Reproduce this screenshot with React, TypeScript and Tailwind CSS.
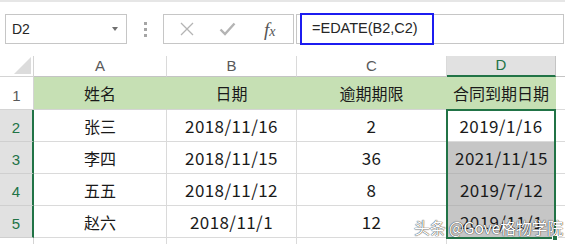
import React from 'react';

const rows = [
  ['姓名', '日期', '逾期期限', '合同到期日期'],
  ['张三', '2018/11/16', '2', '2019/1/16'],
  ['李四', '2018/11/15', '36', '2021/11/15'],
  ['五五', '2018/11/12', '8', '2019/7/12'],
  ['赵六', '2018/11/1', '12', '2019/11/1'],
];

const cjk = "font-['Microsoft_YaHei','Noto_Sans_CJK_SC',sans-serif]";
const ui = "font-['Liberation_Sans',Arial,sans-serif]";

function RowHead({ n }: { n: number }) {
  const sel = n >= 2;
  return (
    <div
      className={`flex items-end justify-center pb-[2px] text-[15px] ${ui} border-b ${
        sel
          ? 'bg-[#e1e1e1] text-[#217346] border-r-2 border-r-[#217346] border-b-[#cfcfcf]'
          : 'bg-white text-[#595959] border-r border-[#d4d4d4]'
      }`}
    >
      {n}
    </div>
  );
}

export default function App() {
  return (
    <div className="w-[565px] h-[244px] bg-white overflow-hidden relative">
      <div className="h-[2px] bg-[#e6e6e6]" />

      {/* formula toolbar */}
      <div className={`flex items-center mt-[12px] h-[30px] ${ui}`}>
        <div className="ml-[5px] w-[122px] h-[30px] border border-[#c6c6c6] flex items-center justify-between pl-[6px] pr-[8px]">
          <span className="text-[14px] text-[#262626]">D2</span>
          <span className="w-0 h-0 border-x-[3.5px] border-x-transparent border-t-[4px] border-t-[#707070]" />
        </div>
        <div className="w-[36px] flex flex-col items-center gap-[3px]">
          <span className="w-[3px] h-[3px] bg-[#a6a6a6]" />
          <span className="w-[3px] h-[3px] bg-[#a6a6a6]" />
          <span className="w-[3px] h-[3px] bg-[#a6a6a6]" />
        </div>
        <div className="w-[131px] h-[30px] border border-[#c6c6c6] flex items-center">
          <svg width="16" height="16" viewBox="0 0 16 16" className="ml-[15px]">
            <path d="M2 2 L14 14 M14 2 L2 14" stroke="#b4b4b4" strokeWidth="1.3" fill="none" />
          </svg>
          <svg width="17" height="14" viewBox="0 0 17 14" className="ml-[24px]">
            <path d="M1.5 7.5 L6 12 L15.5 1.5" stroke="#b4b4b4" strokeWidth="2.4" fill="none" />
          </svg>
          <span className="ml-[28px] text-[19px] italic text-[#555555] font-['Liberation_Serif',serif] leading-none">
            f<span className="text-[14px]">x</span>
          </span>
        </div>
        <div className="ml-[2px] w-[268px] h-[30px] border border-[#c6c6c6] flex items-center">
          <div className="ml-[3px] w-[134px] h-[32px] border-2 border-[#1c1cf0] flex items-center pl-[10px] text-[14.5px] text-[#262626]">
            =EDATE(B2,C2)
          </div>
        </div>
      </div>

      {/* sheet grid */}
      <div className="relative mt-[12px] grid grid-cols-[34px_133px_130px_150px_109px_1fr] grid-rows-[21px_33px_32px_32px_32px_32px_1fr] h-[188px]">
        {/* column header row */}
        <div className="border-r border-b border-[#d4d4d4] bg-white flex items-end justify-end pr-[2px] pb-[2px]">
          <svg width="17" height="17" viewBox="0 0 17 17">
            <path d="M17 0 L17 17 L0 17 Z" fill="#dcdcdc" />
          </svg>
        </div>
        {['A', 'B', 'C'].map((c) => (
          <div key={c} className={`border-r border-b border-r-[#dadada] border-b-[#c4c4c4] flex items-center justify-center text-[15px] text-[#595959] ${ui}`}>
            {c}
          </div>
        ))}
        <div className={`bg-[#e1e1e1] border-r border-r-[#c4c4c4] border-b-2 border-b-[#217346] flex items-center justify-center text-[15px] text-[#217346] ${ui}`}>
          D
        </div>
        <div className="border-b border-[#c4c4c4]" />

        {rows.map((r, i) => (
          <React.Fragment key={i}>
            <RowHead n={i + 1} />
            {r.map((v, j) => {
              let cls = 'bg-white border-r border-b border-[#dadada]';
              if (i === 0) cls = 'bg-[#c6e0b4] border-r border-b border-r-[#c6e0b4] border-b-[#d4d4d4]';
              else if (j === 3 && i > 1) cls = 'bg-[#c6c6c6] border-b border-[#b8b8b8]';
              const num = i > 0 && j > 0;
              return (
                <div
                  key={j}
                  className={`${cls} flex items-center justify-center text-[#1a1a1a] ${cjk} ${
                    num ? 'text-[17px] tracking-[0.4px]' : 'text-[16px]'
                  }`}
                >
                  {v}
                </div>
              );
            })}
            <div className={`border-b border-[#dadada] ${i === 0 ? 'bg-white' : ''}`} />
          </React.Fragment>
        ))}

        <div className="border-r border-[#d4d4d4]" />
        <div className="border-r border-[#dadada]" />
        <div className="border-r border-[#dadada]" />
        <div className="border-r border-[#dadada]" />
        <div />
        <div />

        {/* selection D2:D5 */}
        <div className="absolute left-[446px] top-[53px] w-[110px] h-[130px] border-2 border-[#217346] pointer-events-none" />
        <div className="absolute left-[552px] top-[179px] w-[6px] h-[6px] bg-[#217346] border border-white" />
      </div>

      {/* watermark */}
      <div className={`absolute left-[414px] top-[219px] text-[16px] text-white leading-none tracking-[-0.3px] ${cjk} [text-shadow:0_0_1px_#333,0_0_1px_#333]`}>
        头条 @Gove格物学院
      </div>
    </div>
  );
}
